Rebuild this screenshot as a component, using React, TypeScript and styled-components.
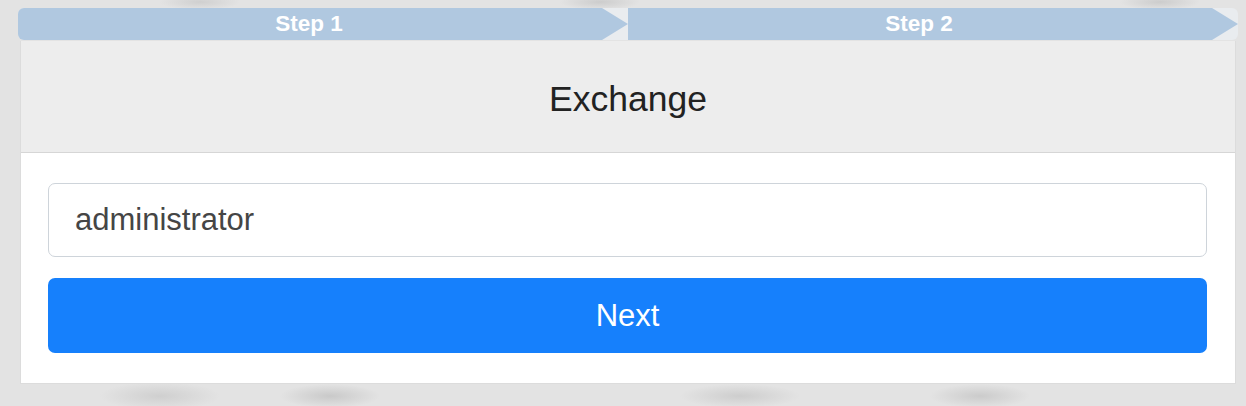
import React from 'react'
import styled, { createGlobalStyle } from 'styled-components'

const GlobalStyle = createGlobalStyle`
  html, body {
    margin: 0;
    padding: 0;
    background: #e3e3e3;
    font-family: "Liberation Sans", Arial, sans-serif;
  }
`

const Page = styled.div`
  width: 1246px;
  height: 406px;
  box-sizing: border-box;
  padding: 8px 8px 0 18px;
  background:
    radial-gradient(ellipse 60px 14px at 160px 396px, #cfcfcf, transparent),
    radial-gradient(ellipse 50px 12px at 330px 396px, #c9c9c9, transparent),
    radial-gradient(ellipse 60px 12px at 740px 396px, #cdcdcd, transparent),
    radial-gradient(ellipse 50px 12px at 980px 396px, #cbcbcb, transparent),
    radial-gradient(ellipse 40px 8px at 200px 2px, #cfcfcf, transparent),
    radial-gradient(ellipse 40px 8px at 600px 2px, #cccccc, transparent),
    radial-gradient(ellipse 40px 8px at 1160px 2px, #cccccc, transparent),
    #e3e3e3;
`

const StepBar = styled.div`
  display: flex;
  height: 32px;
  background: #e9ecef;
  border-radius: 6px;
  overflow: hidden;
`

const Step = styled.div<{ $active?: boolean }>`
  flex: 1;
  display: flex;
  align-items: center;
  padding-right: 28px;
  justify-content: center;
  background: ${(p) => (p.$active ? '#5b9bd5' : '#b0c8e0')};
  clip-path: polygon(0 0, calc(100% - 26px) 0, 100% 50%, calc(100% - 26px) 100%, 0 100%);
  color: #ffffff;
  font-weight: bold;
  font-size: 22.5px;
`

const Card = styled.div`
  margin: 1px 2px 0 2px;
  background: #ffffff;
  border: 1px solid #dcdcdc;
  border-top: none;
`

const CardHeader = styled.div`
  height: 112px;
  box-sizing: border-box;
  padding-top: 5px;
  display: flex;
  align-items: center;
  justify-content: center;
  background: #ededed;
  border-bottom: 1px solid #d6d6d6;
  color: #222222;
  font-size: 35.5px;
`

const CardBody = styled.div`
  display: flex;
  flex-direction: column;
  gap: 21px;
  padding: 30px 28px 30px 27px;
`

const TextInput = styled.input`
  height: 74px;
  box-sizing: border-box;
  border: 1.5px solid #ced4da;
  border-radius: 7px;
  padding: 0 26px;
  font-family: inherit;
  font-size: 31px;
  color: #454545;
  background: #fff;
  outline: none;
`

const PrimaryButton = styled.button`
  height: 75px;
  border: none;
  border-radius: 7px;
  background: #1680fc;
  color: #ffffff;
  font-family: inherit;
  font-size: 31px;
  cursor: pointer;
`

const App = () => {
  return (
    <>
      <GlobalStyle />
      <Page>
        <StepBar>
          <Step>Step 1</Step>
          <Step>Step 2</Step>
        </StepBar>
        <Card>
          <CardHeader>Exchange</CardHeader>
          <CardBody>
            <TextInput defaultValue="administrator" />
            <PrimaryButton>Next</PrimaryButton>
          </CardBody>
        </Card>
      </Page>
    </>
  )
}

export default App
